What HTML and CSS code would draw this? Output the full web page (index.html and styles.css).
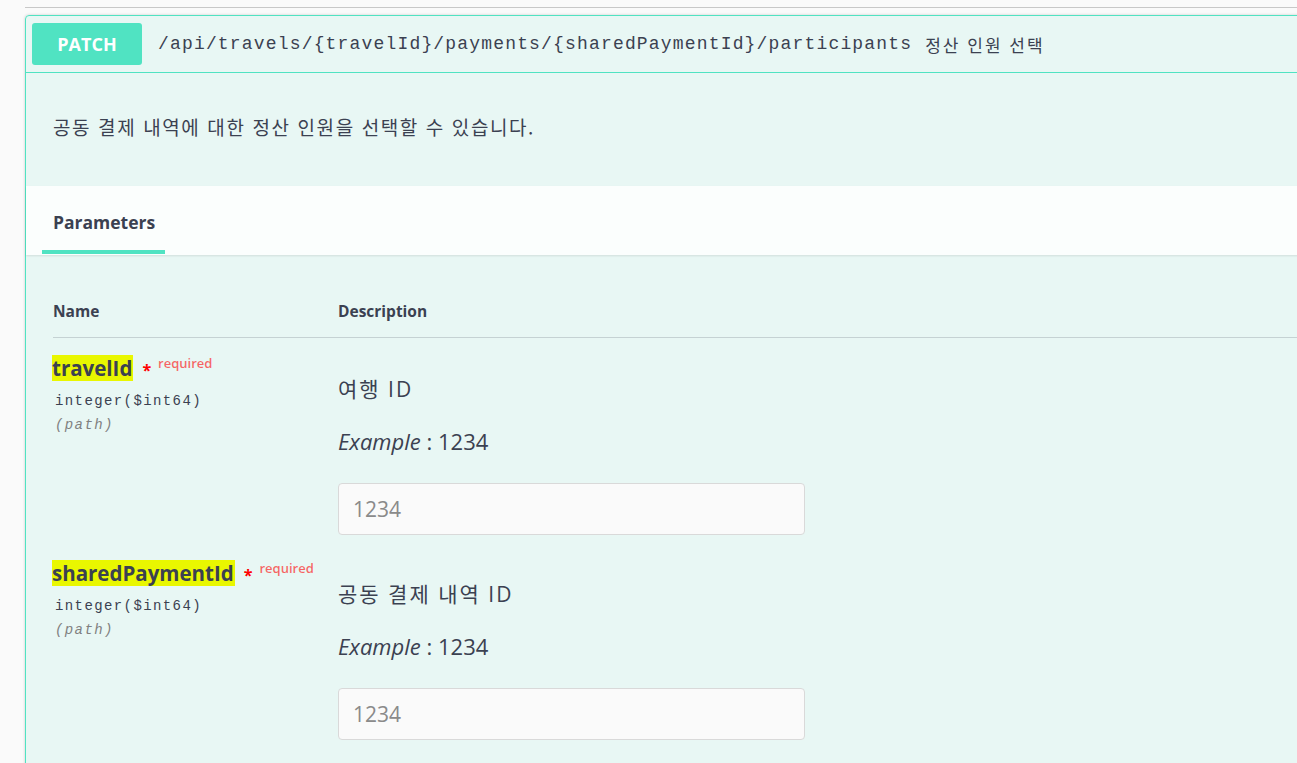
FILE: index.html
```html
<!DOCTYPE html>
<html lang="ko">
<head>
<meta charset="utf-8">
<title>Swagger</title>
<link rel="stylesheet" href="styles.css">
</head>
<body>
<div class="page">
  <div class="topline"></div>
  <div class="opblock">
    <div class="summary">
      <span class="method">PATCH</span>
      <span class="path">/api/travels/{travelId}/payments/{sharedPaymentId}/participants</span>
      <span class="summary-desc">정산 인원 선택</span>
    </div>
    <div class="description">
      <p>공동 결제 내역에 대한 정산 인원을 선택할 수 있습니다.</p>
    </div>
    <div class="tab-header">
      <div class="tab">Parameters</div>
    </div>
    <div class="params">
      <div class="params-head">
        <div class="col-name">Name</div>
        <div class="col-desc">Description</div>
      </div>
      <div class="param-row">
        <div class="name-cell">
          <div class="param-name"><span class="hl">travelId</span><span class="star">*</span><span class="req">required</span></div>
          <div class="param-type">integer($int64)</div>
          <div class="param-in">(path)</div>
        </div>
        <div class="desc-cell">
          <p class="desc-text">여행 ID</p>
          <p class="example"><i>Example</i> : 1234</p>
          <input class="field" type="text" placeholder="1234">
        </div>
      </div>
      <div class="param-row">
        <div class="name-cell">
          <div class="param-name"><span class="hl">sharedPaymentId</span><span class="star">*</span><span class="req">required</span></div>
          <div class="param-type">integer($int64)</div>
          <div class="param-in">(path)</div>
        </div>
        <div class="desc-cell">
          <p class="desc-text">공동 결제 내역 ID</p>
          <p class="example"><i>Example</i> : 1234</p>
          <input class="field" type="text" placeholder="1234">
        </div>
      </div>
    </div>
  </div>
</div>
</body>
</html>
```
FILE: styles.css
```css
html, body {
  margin: 0;
  padding: 0;
  background: #fafafa;
  overflow: hidden;
}
body {
  font-family: "Open Sans", "Noto Sans CJK KR", sans-serif;
  color: #3b4151;
}
.page {
  padding-left: 25px;
  width: 1500px;
}
.topline {
  margin-top: 7px;
  height: 0;
  border-top: 1px solid #c8c8c8;
}
.opblock {
  margin-top: 7px;
  border: 1px solid #50e3c2;
  border-radius: 4px;
  background: rgba(80, 227, 194, 0.1);
  box-shadow: 0 0 3px rgba(0, 0, 0, 0.19);
}
.summary {
  display: flex;
  align-items: center;
  padding: 7px 6px;
  border-bottom: 1px solid #50e3c2;
}
.method {
  display: flex;
  align-items: center;
  justify-content: center;
  width: 110px;
  height: 42px;
  background: #50e3c2;
  border-radius: 3px;
  color: #fff;
  font-weight: 700;
  font-size: 18px;
  font-family: "Open Sans", sans-serif;
}
.path {
  margin-left: 16px;
  font-family: "Liberation Mono", monospace;
  font-size: 18px;
  letter-spacing: 1.17px;
  color: #3b4151;
}
.summary-desc {
  margin-left: 13px;
  font-family: "Noto Sans CJK KR", sans-serif;
  font-size: 17px;
  letter-spacing: 2px;
  color: #3b4151;
}
.description {
  padding: 42px 0 47px 27px;
}
.description p {
  margin: 0;
  font-family: "Noto Sans CJK KR", sans-serif;
  font-size: 19px;
  letter-spacing: 1.6px;
  line-height: 24px;
}
.tab-header {
  background: rgba(255, 255, 255, 0.8);
  box-shadow: 0 1px 2px rgba(0, 0, 0, 0.1);
  padding-left: 16px;
  height: 69px;
}
.tab {
  display: inline-block;
  box-sizing: border-box;
  width: 123px;
  padding: 24px 0 0 11px;
  height: 68px;
  border-bottom: 4px solid #50e3c2;
  font-weight: 700;
  font-size: 17.5px;
  line-height: 24px;
}
.params {
  padding: 46px 0 60px 27px;
}
.params-head {
  display: flex;
  padding-bottom: 16px;
  border-bottom: 1px solid rgba(59, 65, 81, 0.2);
  font-weight: 700;
  font-size: 15.5px;
  line-height: 20px;
}
.col-name, .name-cell {
  width: 285px;
  flex: none;
}
.param-row {
  display: flex;
  padding-bottom: 8px;
}
.name-cell {
  padding-top: 17px;
}
.param-name {
  display: flex;
  align-items: flex-start;
  font-size: 20.5px;
  font-weight: 700;
  line-height: 26px;
}
.hl {
  background: #e9f700;
  padding: 0 1px 0 0;
  margin-left: -1px;
}
.star {
  color: #f00;
  font-size: 16px;
  margin-left: 9px;
  line-height: 30px;
}
.req {
  color: rgba(255, 0, 0, 0.6);
  font-size: 13px;
  font-weight: 600;
  line-height: 16px;
  margin-left: 7px;
}
.param-type, .param-in {
  font-family: "Liberation Mono", monospace;
  font-size: 14px;
  letter-spacing: 1.4px;
  line-height: 24px;
  margin-left: 2px;
}
.param-type {
  margin-top: 4px;
}
.param-in {
  font-style: italic;
  color: #808080;
}
.desc-cell {
  padding-top: 37px;
  display: flex;
  flex-direction: column;
  align-items: flex-start;
}
.desc-text, .example {
  margin: 0;
  line-height: 28px;
  font-family: "Open Sans", "Noto Sans CJK KR", sans-serif;
}
.desc-text {
  font-size: 21px;
  letter-spacing: 2px;
}
.example {
  margin-top: 24px;
  font-size: 22px;
}
.field {
  margin-top: 28px;
  box-sizing: border-box;
  width: 467px;
  height: 52px;
  padding: 0 14px;
  border: 1px solid #d9d9d9;
  border-radius: 4px;
  background: #fafafa;
  font-family: "Open Sans", sans-serif;
  font-size: 21px;
  color: #3b4151;
  outline: none;
}
.field::placeholder {
  color: #8a8a8a;
}
```
